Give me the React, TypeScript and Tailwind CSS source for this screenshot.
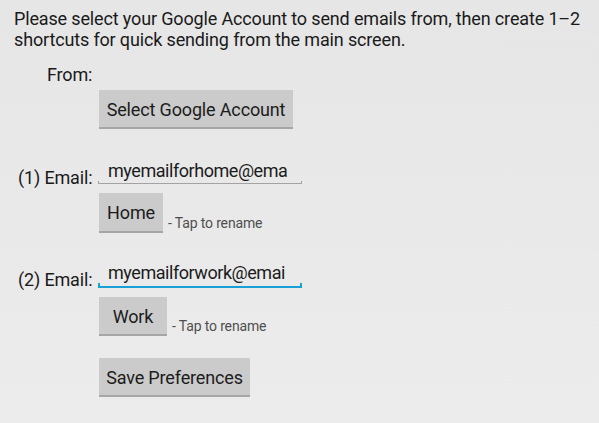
const font = { fontFamily: "Roboto, 'Noto Sans', sans-serif" };

const HoloButton = ({ label, className }: { label: string; className?: string }) => (
  <button
    type="button"
    className={`h-[39px] pt-[2px] bg-[#cbcbcb] border-b-2 border-[#a6a6a6] text-[18px] text-[#1c1c1c] leading-none ${className ?? ""}`}
  >
    {label}
  </button>
);

const EmailField = ({ value, focused }: { value: string; focused?: boolean }) => (
  <div className="w-[204px] flex flex-col">
    <div className="pl-[10px] text-[18px] leading-[20px] tracking-[-0.45px] text-[#1c1c1c] overflow-hidden whitespace-nowrap">
      {value}
    </div>
    {focused ? (
      <div className="h-[5px] border-x-2 border-b-2 border-[#1a9fd6]" />
    ) : (
      <div className="h-[3px] border-x border-b border-[#a3a3a3]" />
    )}
  </div>
);

const TapHint = () => (
  <span className="ml-[5px] mb-[2px] text-[14px] leading-[16px] text-[#4f4f4f]">- Tap to rename</span>
);

export default function App() {
  return (
    <div
      className="w-[599px] h-[423px] overflow-hidden bg-gradient-to-b from-[#e6e6e6] to-[#ececec] text-[#1a1a1a] tracking-[-0.15px]"
      style={font}
    >
      <p className="pl-[14px] pt-[8px] text-[18px] leading-[21px] whitespace-nowrap">
        Please select your Google Account to send emails from, then create 1–2
        <br />
        shortcuts for quick sending from the main screen.
      </p>

      <div className="mt-[15px] pl-[47px] text-[18px] leading-[20px]">From:</div>

      <div className="pl-[99px] mt-[5px]">
        <HoloButton label="Select Google Account" className="w-[194px]" />
      </div>

      <div className="mt-[32px] flex items-start">
        <div className="pl-[18px] w-[98px] mt-[7px] text-[18px] leading-[20px]">(1) Email:</div>
        <EmailField value="myemailforhome@ema" />
      </div>

      <div className="pl-[99px] mt-[5px] flex items-end">
        <HoloButton label="Home" className="w-[64px] h-[40px]" />
        <TapHint />
      </div>

      <div className="mt-[30px] flex items-start">
        <div className="pl-[18px] w-[98px] mt-[7px] text-[18px] leading-[20px]">(2) Email:</div>
        <EmailField value="myemailforwork@emai" focused />
      </div>

      <div className="pl-[99px] mt-[7px] flex items-end">
        <HoloButton label="Work" className="w-[68px]" />
        <TapHint />
      </div>

      <div className="pl-[99px] mt-[22px]">
        <HoloButton label="Save Preferences" className="w-[151px]" />
      </div>
    </div>
  );
}
